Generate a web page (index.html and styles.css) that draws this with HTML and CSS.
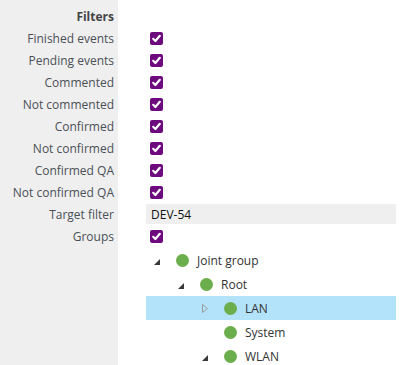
FILE: index.html
```html
<!DOCTYPE html>
<html>
<head>
<meta charset="utf-8">
<link rel="stylesheet" href="styles.css">
</head>
<body>
<div class="form">
  <div class="label head">Filters</div><div class="value"></div>
  <div class="label">Finished events</div><div class="value"><span class="cb"><svg viewBox="0 0 13 13"><path d="M3.2 6.8 L5.4 9 L9.8 3.8" /></svg></span></div>
  <div class="label">Pending events</div><div class="value"><span class="cb"><svg viewBox="0 0 13 13"><path d="M3.2 6.8 L5.4 9 L9.8 3.8" /></svg></span></div>
  <div class="label">Commented</div><div class="value"><span class="cb"><svg viewBox="0 0 13 13"><path d="M3.2 6.8 L5.4 9 L9.8 3.8" /></svg></span></div>
  <div class="label">Not commented</div><div class="value"><span class="cb"><svg viewBox="0 0 13 13"><path d="M3.2 6.8 L5.4 9 L9.8 3.8" /></svg></span></div>
  <div class="label">Confirmed</div><div class="value"><span class="cb"><svg viewBox="0 0 13 13"><path d="M3.2 6.8 L5.4 9 L9.8 3.8" /></svg></span></div>
  <div class="label">Not confirmed</div><div class="value"><span class="cb"><svg viewBox="0 0 13 13"><path d="M3.2 6.8 L5.4 9 L9.8 3.8" /></svg></span></div>
  <div class="label">Confirmed QA</div><div class="value"><span class="cb"><svg viewBox="0 0 13 13"><path d="M3.2 6.8 L5.4 9 L9.8 3.8" /></svg></span></div>
  <div class="label">Not confirmed QA</div><div class="value"><span class="cb"><svg viewBox="0 0 13 13"><path d="M3.2 6.8 L5.4 9 L9.8 3.8" /></svg></span></div>
  <div class="label">Target filter</div><div class="value"><div class="input">DEV-54</div></div>
  <div class="label">Groups</div><div class="value"><span class="cb"><svg viewBox="0 0 13 13"><path d="M3.2 6.8 L5.4 9 L9.8 3.8" /></svg></span></div>
  <div class="label"></div>
  <div class="value">
    <ul class="tree">
      <li class="node lvl0"><span class="exp"><svg class="open" viewBox="0 0 6 6"><polygon points="6,0 6,6 0,6"/></svg></span><span class="dot"></span><span class="name">Joint group</span></li>
      <li class="node lvl1"><span class="exp"><svg class="open" viewBox="0 0 6 6"><polygon points="6,0 6,6 0,6"/></svg></span><span class="dot"></span><span class="name">Root</span></li>
      <li class="node lvl2 selected"><span class="exp"><svg class="closed" viewBox="0 0 6 9"><polygon points="0.5,0.5 5.5,4.5 0.5,8.5"/></svg></span><span class="dot"></span><span class="name">LAN</span></li>
      <li class="node lvl2"><span class="exp"></span><span class="dot"></span><span class="name">System</span></li>
      <li class="node lvl2"><span class="exp"><svg class="open" viewBox="0 0 6 6"><polygon points="6,0 6,6 0,6"/></svg></span><span class="dot"></span><span class="name">WLAN</span></li>
    </ul>
  </div>
</div>
</body>
</html>
```
FILE: styles.css
```css
html, body {
  margin: 0;
  padding: 0;
  height: 100%;
  overflow: hidden;
}
body {
  font-family: "Open Sans", "Noto Sans", sans-serif;
  font-size: 12px;
  color: #333;
  background: linear-gradient(to right, #efefef 118px, #ffffff 118px);
}
.form {
  display: grid;
  grid-template-columns: 118px 1fr;
  grid-auto-rows: 22px;
  padding-top: 5px;
}
.label {
  display: flex;
  align-items: center;
  justify-content: flex-end;
  padding-right: 4px;
  color: #4a4f57;
  white-space: nowrap;
}
.label.head {
  font-weight: bold;
  color: #444;
}
.value {
  display: flex;
  align-items: center;
  padding-left: 28px;
  padding-right: 12px;
}
.cb {
  width: 13px;
  height: 13px;
  margin-left: 4px;
  margin-top: 1px;
  background: #6d0a7e;
  border-radius: 2px;
  display: block;
}
.cb svg {
  width: 13px;
  height: 13px;
  display: block;
}
.cb path {
  fill: none;
  stroke: #fff;
  stroke-width: 2.2;
  stroke-linecap: round;
  stroke-linejoin: round;
}
.input {
  flex: 1;
  height: 20px;
  background: #efefef;
  color: #111;
  padding-left: 5px;
  display: flex;
  align-items: center;
}
.form > .value:last-child {
  grid-row: span 5;
  align-items: flex-start;
  margin-top: 1px;
}
.tree {
  list-style: none;
  margin: 0;
  padding: 0;
  flex: 1;
}
.node {
  height: 24px;
  display: flex;
  align-items: center;
  padding-left: 8px;
  color: #333;
}
.node.lvl1 { padding-left: 32px; }
.node.lvl2 { padding-left: 56px; }
.node.selected { background: #b3e3fa; }
.exp {
  width: 22px;
  height: 24px;
  display: flex;
  align-items: center;
}
.exp svg.open {
  width: 6px;
  height: 6px;
  margin-top: 3px;
}
.exp svg.open polygon { fill: #3a3a3a; }
.exp svg.closed {
  width: 6px;
  height: 9px;
}
.exp svg.closed polygon {
  fill: none;
  stroke: #9a9a9a;
  stroke-width: 1;
}
.dot {
  width: 13px;
  height: 13px;
  border-radius: 50%;
  background: #6cae4b;
  margin-right: 8px;
}
.name {
  white-space: nowrap;
}
```
